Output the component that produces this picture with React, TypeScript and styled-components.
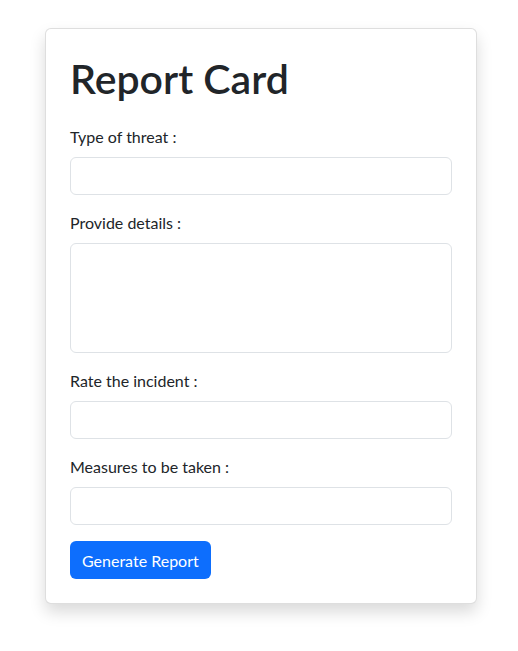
import React from "react";
import styled, { createGlobalStyle } from "styled-components";

const Global = createGlobalStyle`
  * { box-sizing: border-box; }
  body {
    margin: 0;
    background: #fff;
    font-family: Lato, "Noto Sans", sans-serif;
    color: #212529;
  }
`;

const Page = styled.div`
  padding: 28px 41px 48px 45px;
`;

const Card = styled.div`
  width: 432px;
  border: 1px solid rgba(0, 0, 0, 0.13);
  border-radius: 6px;
  background: #fff;
  box-shadow: 0 8px 16px rgba(0, 0, 0, 0.15);
  padding: 24px;
`;

const Title = styled.h1`
  margin: 0 0 24px;
  font-size: 41px;
  font-weight: 600;
  line-height: 48px;
  padding-top: 2px;
  height: 48px;
`;

const Group = styled.div`
  margin-bottom: 16px;
`;

const Label = styled.label`
  display: block;
  font-size: 16px;
  line-height: 24px;
  margin-bottom: 8px;
`;

const Input = styled.input`
  display: block;
  width: 100%;
  height: 38px;
  border: 1px solid #dee2e6;
  border-radius: 6px;
  padding: 6px 12px;
  font: inherit;
`;

const TextArea = styled.textarea`
  display: block;
  width: 100%;
  height: 110px;
  border: 1px solid #dee2e6;
  border-radius: 6px;
  padding: 6px 12px;
  font: inherit;
  resize: none;
`;

const Button = styled.button`
  height: 38px;
  padding: 0 12px;
  border: none;
  border-radius: 6px;
  background: #0d6efd;
  color: #fff;
  font: inherit;
  font-size: 16px;
`;

export default function App() {
  return (
    <Page>
      <Global />
      <Card>
        <Title>Report Card</Title>
        <Group>
          <Label>Type of threat :</Label>
          <Input />
        </Group>
        <Group>
          <Label>Provide details :</Label>
          <TextArea />
        </Group>
        <Group>
          <Label>Rate the incident :</Label>
          <Input />
        </Group>
        <Group>
          <Label>Measures to be taken :</Label>
          <Input />
        </Group>
        <Button>Generate Report</Button>
      </Card>
    </Page>
  );
}
